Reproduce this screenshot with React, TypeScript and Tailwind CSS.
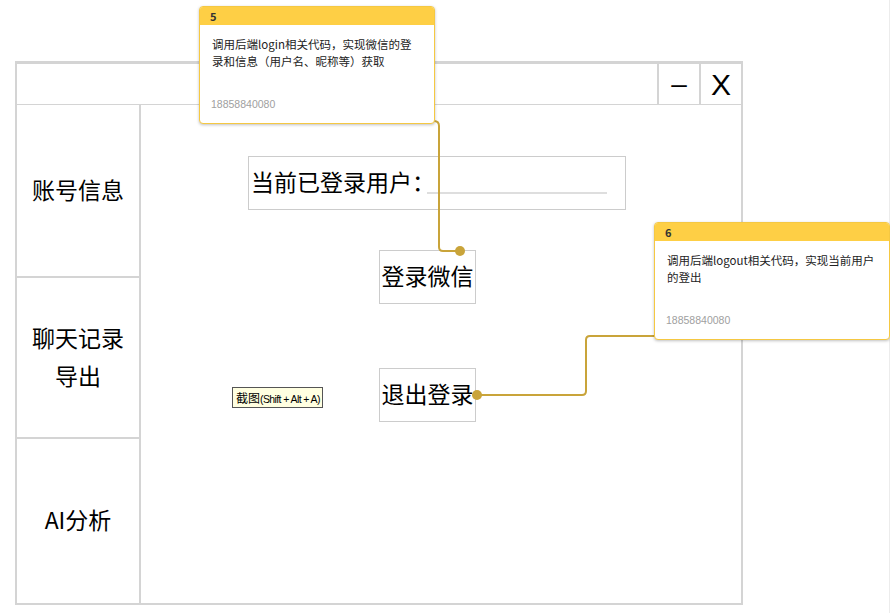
const cjk = { fontFamily: '"Microsoft YaHei", "Noto Sans CJK SC", "Noto Sans", sans-serif' }

const Note = ({ num, text, phone, className }: { num: string; text: string; phone: string; className: string }) => (
  <div
    className={`absolute w-[236px] h-[118px] rounded-[4px] border border-[#f5c842] bg-white shadow-[0_1px_3px_rgba(0,0,0,0.25)] overflow-hidden flex flex-col ${className}`}
  >
    <div className="h-[18px] bg-[#fecf45] px-[10px] text-[11px] font-bold leading-[18px] text-[#333]">{num}</div>
    <div className="px-[12px] pt-[11px] text-[11.5px] leading-[17px] text-[#222] flex-1">{text}</div>
    <div className="px-[11px] pb-[10px] text-[10.5px] text-[#a0a0a0]" style={{ fontFamily: '"Liberation Sans", sans-serif' }}>
      {phone}
    </div>
  </div>
)

const SideItem = ({ children, h }: { children: React.ReactNode; h: string }) => (
  <div className={`${h} flex items-center justify-center pb-[4px] text-center text-[23px] leading-[38px] text-black border-b-2 border-[#d4d4d4] last:border-b-0`}>
    {children}
  </div>
)

export default function App() {
  return (
    <div className="relative w-[890px] h-[613px] bg-white overflow-hidden" style={cjk}>
      {/* window frame */}
      <div className="ml-[15px] mt-[61px] w-[728px] h-[544px] border-2 border-t-[3px] border-[#d4d4d4] flex flex-col">
        <div className="h-[41px] flex justify-end border-b border-[#d4d4d4]">
          <div className="w-[42px] border-l-2 border-[#d4d4d4] flex items-center justify-center text-[28px] text-black" style={{ fontFamily: '"Liberation Sans", sans-serif' }}>
            –
          </div>
          <div className="w-[42px] border-l-2 border-[#d4d4d4] flex items-center justify-center text-[30px] text-black" style={{ fontFamily: '"Liberation Sans", sans-serif' }}>
            X
          </div>
        </div>
        <div className="flex flex-1">
          <div className="w-[124px] border-r-2 border-[#d4d4d4] flex flex-col">
            <SideItem h="h-[173px]">账号信息</SideItem>
            <SideItem h="h-[161px]">
              <div>
                聊天记录
                <br />
                导出
              </div>
            </SideItem>
            <SideItem h="flex-1">AI分析</SideItem>
          </div>
          <div className="flex-1 pl-[107px] pt-[51px] flex flex-col items-start">
            <div className="w-[378px] h-[54px] border border-[#cccccc] flex items-center pl-[2px] pb-[4px]">
              <span className="text-[23px] text-black">当前已登录用户：</span>
              <div className="ml-[-8px] mt-[24px] w-[180px] h-[2px] bg-[#dedede]" />
            </div>
            <div className="ml-[131px] mt-[40px] w-[97px] h-[54px] border border-[#cccccc] flex items-center justify-center pb-[3px] text-[23px] text-black">
              登录微信
            </div>
            <div className="ml-[131px] mt-[64px] w-[97px] h-[54px] border border-[#cccccc] flex items-center justify-center pb-[3px] text-[23px] text-black">
              退出登录
            </div>
          </div>
        </div>
      </div>

      {/* right edge line */}
      <div className="absolute right-0 top-0 h-full w-px bg-[#ececec]" />

      {/* screenshot tooltip */}
      <div className="absolute left-[232px] top-[387px] h-[21px] pl-[3px] pr-[2px] border border-[#555] bg-[#ffffe1] text-[12px] leading-[19px] text-black whitespace-nowrap" style={cjk}>
        截图<span className="text-[10.5px] tracking-[-0.6px]" style={{ fontFamily: '"Liberation Sans", sans-serif' }}>(Shift + Alt + A)</span>
      </div>

      {/* connectors */}
      <svg className="absolute left-0 top-0" width="890" height="613">
        <path d="M434 121 Q439 121 439 126 L439 247 Q439 251 443 251 L460 251" fill="none" stroke="#c9a43a" strokeWidth="2" />
        <circle cx="460" cy="251" r="5" fill="#c9a43a" />
        <path d="M477 395 L582 395 Q586 395 586 391 L586 340 Q586 336 590 336 L655 336" fill="none" stroke="#c9a43a" strokeWidth="2" />
        <circle cx="477" cy="395" r="5" fill="#c9a43a" />
      </svg>

      <Note className="left-[199px] top-[6px]" num="5" text="调用后端login相关代码，实现微信的登录和信息（用户名、昵称等）获取" phone="18858840080" />
      <Note className="left-[654px] top-[222px]" num="6" text="调用后端logout相关代码，实现当前用户的登出" phone="18858840080" />
    </div>
  )
}
